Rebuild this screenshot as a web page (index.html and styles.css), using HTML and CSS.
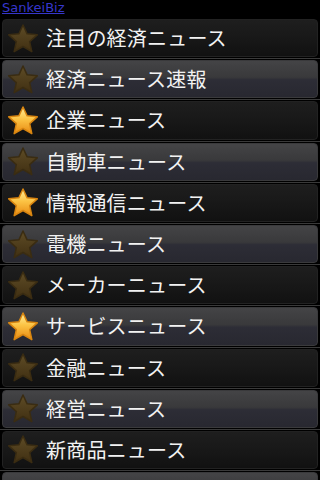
FILE: index.html
```html
<!DOCTYPE html>
<html lang="ja">
<head>
<meta charset="utf-8">
<title>SankeiBiz</title>
<link rel="stylesheet" href="styles.css">
</head>
<body>
<svg class="defs" width="0" height="0" aria-hidden="true">
  <defs>
    <linearGradient id="gold" x1="0" y1="0" x2="0" y2="1">
      <stop offset="0" stop-color="#fff0a0"/>
      <stop offset="0.45" stop-color="#fcc445"/>
      <stop offset="1" stop-color="#e88a12"/>
    </linearGradient>
    <linearGradient id="dull" x1="0" y1="0" x2="0" y2="1">
      <stop offset="0" stop-color="#5e4c26"/>
      <stop offset="1" stop-color="#402f12"/>
    </linearGradient>
    <polygon id="star" points="16,2 20.11,10.84 30.27,11.86 22.66,18.66 24.82,28.64 16,23.5 7.18,28.64 9.34,18.66 1.73,11.86 11.89,10.84"/>
  </defs>
</svg>
<div class="top"><a class="brand" href="#">SankeiBiz</a></div>
<ul class="list">
  <li class="item"><div class="card dark"><svg class="star off" viewBox="0 0 32 31"><use href="#star"/></svg><span class="label">注目の経済ニュース</span></div></li>
  <li class="item"><div class="card light"><svg class="star off" viewBox="0 0 32 31"><use href="#star"/></svg><span class="label">経済ニュース速報</span></div></li>
  <li class="item"><div class="card dark"><svg class="star on" viewBox="0 0 32 31"><use href="#star"/></svg><span class="label">企業ニュース</span></div></li>
  <li class="item"><div class="card light"><svg class="star off" viewBox="0 0 32 31"><use href="#star"/></svg><span class="label">自動車ニュース</span></div></li>
  <li class="item"><div class="card dark"><svg class="star on" viewBox="0 0 32 31"><use href="#star"/></svg><span class="label">情報通信ニュース</span></div></li>
  <li class="item"><div class="card light"><svg class="star off" viewBox="0 0 32 31"><use href="#star"/></svg><span class="label">電機ニュース</span></div></li>
  <li class="item"><div class="card dark"><svg class="star off" viewBox="0 0 32 31"><use href="#star"/></svg><span class="label">メーカーニュース</span></div></li>
  <li class="item"><div class="card light"><svg class="star on" viewBox="0 0 32 31"><use href="#star"/></svg><span class="label">サービスニュース</span></div></li>
  <li class="item"><div class="card dark"><svg class="star off" viewBox="0 0 32 31"><use href="#star"/></svg><span class="label">金融ニュース</span></div></li>
  <li class="item"><div class="card light"><svg class="star off" viewBox="0 0 32 31"><use href="#star"/></svg><span class="label">経営ニュース</span></div></li>
  <li class="item"><div class="card dark"><svg class="star off" viewBox="0 0 32 31"><use href="#star"/></svg><span class="label">新商品ニュース</span></div></li>
  <li class="item"><div class="card light"></div></li>
</ul>
</body>
</html>
```
FILE: styles.css
```css
html, body {
  margin: 0;
  padding: 0;
  background: #000;
  overflow: hidden;
}
body {
  font-family: "Noto Sans CJK JP", "Noto Sans", sans-serif;
}
.defs {
  position: absolute;
  width: 0;
  height: 0;
}
.top {
  height: 18px;
  padding-left: 2px;
  display: flex;
  align-items: flex-start;
}
.brand {
  font-family: "DejaVu Sans", sans-serif;
  font-size: 13px;
  line-height: 16px;
  color: #3636cc;
  text-decoration: underline;
}
.list {
  list-style: none;
  margin: 0;
  padding: 0;
}
.item {
  padding: 1px 2px 1px 2px;
  border-bottom: 1px solid #3a3a3a;
}
.card {
  height: 36.2px;
  border: 1px solid #262626;
  border-radius: 4px;
  display: flex;
  align-items: center;
  padding-left: 4px;
}
.card.dark {
  background: linear-gradient(#1e1e1e 0%, #181818 50%, #111 100%);
  border-color: #222;
}
.card.light {
  background: linear-gradient(#444446 0%, #39393b 45%, #2d2d36 52%, #282830 100%);
  border-color: #3a3a3c;
}
.star {
  width: 32px;
  height: 31px;
  flex: none;
}
.star.on use {
  fill: url(#gold);
  stroke: #d88510;
  stroke-width: 1.5;
  stroke-linejoin: round;
}
.star.off use {
  fill: url(#dull);
  stroke: #3a2c12;
  stroke-width: 1.5;
  stroke-linejoin: round;
}
.label {
  margin-left: 7px;
  color: #f2f2f2;
  font-size: 20px;
  letter-spacing: 0.2px;
  line-height: 24px;
  white-space: nowrap;
}
```
